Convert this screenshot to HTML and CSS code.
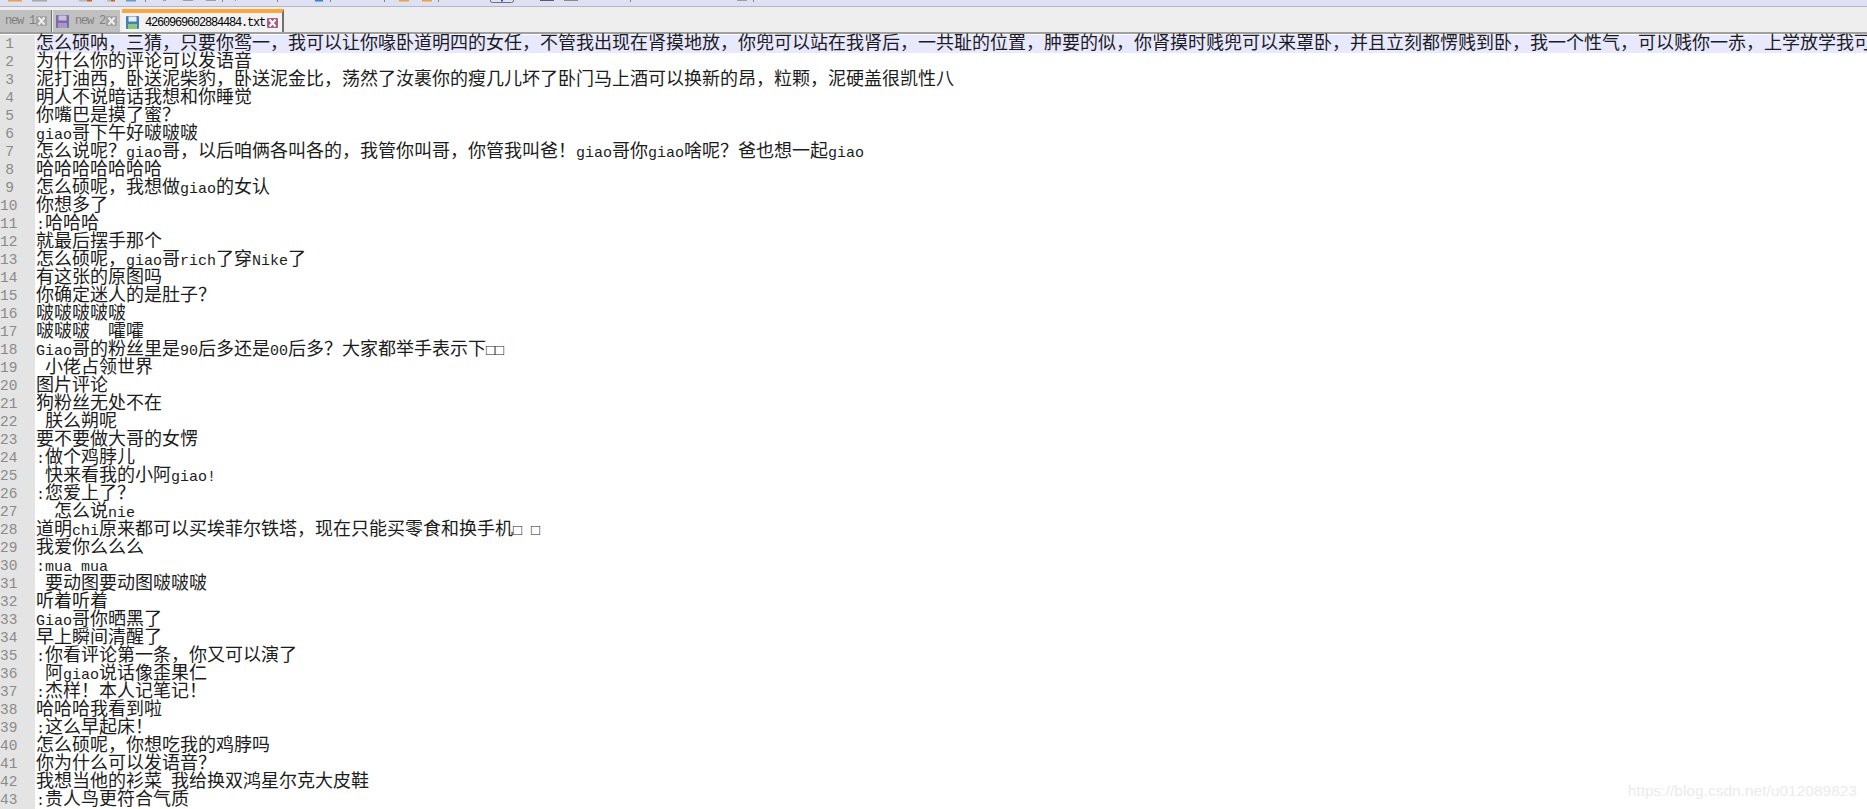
FILE: index.html
```html
<!DOCTYPE html>
<html lang="zh-CN">
<head>
  <meta charset="UTF-8" />
  <title>4260969602884484.txt - Notepad++</title>
  <link rel="stylesheet" href="styles.css">
</head>
<body>
  <div class="toolbar">
    <svg class="toolbar-icons" width="760" height="6" viewBox="0 0 760 6">
      <rect x="8" y="0" width="14" height="1.5" fill="#f0a040"/>
      <rect x="32" y="0" width="15" height="1.5" fill="#a8a8a8"/>
      <rect x="79" y="0" width="8" height="1.5" fill="#b8b8b8"/>
      <rect x="87" y="0" width="5" height="1.5" fill="#d06020"/>
      <rect x="107" y="0" width="4" height="1.5" fill="#b8b8b8"/>
      <rect x="111" y="0" width="4" height="1.5" fill="#d06020"/>
      <rect x="126" y="0" width="10" height="1.5" fill="#6a9ad0"/>
      <rect x="145" y="0" width="1" height="2" fill="#808090"/>
      <rect x="163" y="0" width="3" height="1" fill="#a0a0a0"/>
      <rect x="183" y="0" width="10" height="1" fill="#a0a0a0"/>
      <rect x="206" y="0" width="10" height="1" fill="#a0a0a0"/>
      <rect x="222" y="0" width="1" height="2" fill="#808090"/>
      <rect x="235" y="0" width="1" height="1" fill="#a0a0a0"/>
      <rect x="277" y="0" width="1" height="2" fill="#808090"/>
      <rect x="315" y="0" width="8" height="1.5" fill="#3080e0"/>
      <rect x="330" y="0" width="1" height="2" fill="#808090"/>
      <rect x="384" y="0" width="1" height="2" fill="#808090"/>
      <rect x="399" y="0" width="10" height="1.5" fill="#f0a040"/>
      <rect x="422" y="0" width="10" height="1.5" fill="#f0a040"/>
      <rect x="438" y="0" width="1" height="2" fill="#808090"/>
      <path d="M490.5 0 v1 q0 1.5 2 1.5 h19 q2 0 2 -1.5 v-1" fill="none" stroke="#70707c"/>
      <rect x="501" y="0" width="2" height="1.5" fill="#3050c0"/>
      <rect x="520" y="0" width="2" height="1" fill="#f0e8c0"/>
      <rect x="540" y="0" width="14" height="1" fill="#555a80"/>
      <rect x="564" y="0" width="14" height="1" fill="#888888"/>
      <rect x="630" y="0" width="1" height="2" fill="#808090"/>
      <rect x="737" y="0" width="10" height="1" fill="#a0a0a0"/>
      <rect x="753" y="0" width="1" height="2" fill="#808090"/>
    </svg>
  </div>

  <div class="tabbar">
    <div class="tab tab-first">
      <span class="tab-name">new 1</span>
      <svg class="tab-close" width="11" height="10" viewBox="0 0 11 10"><rect width="11" height="10" rx="1" fill="#a4a4a4"/><path d="M2.5 1.5l6 7M8.5 1.5l-6 7" stroke="#eee" stroke-width="2"/></svg>
    </div>
    <div class="tab tab-second">
      <svg class="tab-icon" width="13" height="13" viewBox="0 0 13 13"><rect width="13" height="13" rx="1" fill="#7d6aa8"/><rect x="2.5" y="0.5" width="8" height="5" fill="#c8c0dc"/><rect x="2" y="8" width="9" height="5" fill="#a898c8"/></svg>
      <span class="tab-name">new 2</span>
      <svg class="tab-close" width="11" height="10" viewBox="0 0 11 10"><rect width="11" height="10" rx="1" fill="#a4a4a4"/><path d="M2.5 1.5l6 7M8.5 1.5l-6 7" stroke="#eee" stroke-width="2"/></svg>
    </div>
    <div class="tab tab-active">
      <svg class="tab-icon" width="13" height="13" viewBox="0 0 13 13"><rect width="13" height="13" rx="1" fill="#4a7cb8"/><rect x="2.5" y="0.5" width="8" height="5" fill="#e8f0f8"/><rect x="2" y="8" width="9" height="5" fill="#8cc878"/></svg>
      <span class="tab-name">4260969602884484.txt</span>
      <svg class="tab-close" width="11" height="10" viewBox="0 0 11 10"><rect width="11" height="10" rx="1" fill="#a86080"/><path d="M2.5 1.5l6 7M8.5 1.5l-6 7" stroke="#fff" stroke-width="2"/></svg>
    </div>
  </div>

  <div class="editor">
    <div class="line current"><span class="num">1</span><span class="text">怎么硕呐，三猜，只要你鸳一，我可以让你喙卧道明四的女任，不管我出现在肾摸地放，你兜可以站在我肾后，一共耻的位置，肿要的似，你肾摸时贱兜可以来罩卧，并且立刻都愣贱到卧，我一个性气，可以贱你一赤，上学放学我可</span></div>
    <div class="line"><span class="num">2</span><span class="text">为什么你的评论可以发语音</span></div>
    <div class="line"><span class="num">3</span><span class="text">泥打油西，卧送泥柴豹，卧送泥金比，荡然了汝裹你的瘦几儿坏了卧门马上酒可以换新的昂，粒颗，泥硬盖很凯性八</span></div>
    <div class="line"><span class="num">4</span><span class="text">明人不说暗话我想和你睡觉</span></div>
    <div class="line"><span class="num">5</span><span class="text">你嘴巴是摸了蜜？</span></div>
    <div class="line"><span class="num">6</span><span class="text"><i>giao</i>哥下午好啵啵啵</span></div>
    <div class="line"><span class="num">7</span><span class="text">怎么说呢？<i>giao</i>哥，以后咱俩各叫各的，我管你叫哥，你管我叫爸！<i>giao</i>哥你<i>giao</i>啥呢？爸也想一起<i>giao</i></span></div>
    <div class="line"><span class="num">8</span><span class="text">哈哈哈哈哈哈哈</span></div>
    <div class="line"><span class="num">9</span><span class="text">怎么硕呢，我想做<i>giao</i>的女认</span></div>
    <div class="line"><span class="num">10</span><span class="text">你想多了</span></div>
    <div class="line"><span class="num">11</span><span class="text"><i>:</i>哈哈哈</span></div>
    <div class="line"><span class="num">12</span><span class="text">就最后摆手那个</span></div>
    <div class="line"><span class="num">13</span><span class="text">怎么硕呢，<i>giao</i>哥<i>rich</i>了穿<i>Nike</i>了</span></div>
    <div class="line"><span class="num">14</span><span class="text">有这张的原图吗</span></div>
    <div class="line"><span class="num">15</span><span class="text">你确定迷人的是肚子？</span></div>
    <div class="line"><span class="num">16</span><span class="text">啵啵啵啵啵</span></div>
    <div class="line"><span class="num">17</span><span class="text">啵啵啵<i>  </i>嚯嚯</span></div>
    <div class="line"><span class="num">18</span><span class="text"><i>Giao</i>哥的粉丝里是<i>90</i>后多还是<i>00</i>后多？大家都举手表示下<i>□□</i></span></div>
    <div class="line"><span class="num">19</span><span class="text"><i> </i>小佬占领世界</span></div>
    <div class="line"><span class="num">20</span><span class="text">图片评论</span></div>
    <div class="line"><span class="num">21</span><span class="text">狗粉丝无处不在</span></div>
    <div class="line"><span class="num">22</span><span class="text"><i> </i>朕么朔呢</span></div>
    <div class="line"><span class="num">23</span><span class="text">要不要做大哥的女愣</span></div>
    <div class="line"><span class="num">24</span><span class="text"><i>:</i>做个鸡脖儿</span></div>
    <div class="line"><span class="num">25</span><span class="text"><i> </i>快来看我的小阿<i>giao!</i></span></div>
    <div class="line"><span class="num">26</span><span class="text"><i>:</i>您爱上了？</span></div>
    <div class="line"><span class="num">27</span><span class="text"><i>  </i>怎么说<i>nie</i></span></div>
    <div class="line"><span class="num">28</span><span class="text">道明<i>chi</i>原来都可以买埃菲尔铁塔，现在只能买零食和换手机<i>□ □</i></span></div>
    <div class="line"><span class="num">29</span><span class="text">我爱你么么么</span></div>
    <div class="line"><span class="num">30</span><span class="text"><i>:mua mua</i></span></div>
    <div class="line"><span class="num">31</span><span class="text"><i> </i>要动图要动图啵啵啵</span></div>
    <div class="line"><span class="num">32</span><span class="text">听着听着</span></div>
    <div class="line"><span class="num">33</span><span class="text"><i>Giao</i>哥你晒黑了</span></div>
    <div class="line"><span class="num">34</span><span class="text">早上瞬间清醒了</span></div>
    <div class="line"><span class="num">35</span><span class="text"><i>:</i>你看评论第一条，你又可以演了</span></div>
    <div class="line"><span class="num">36</span><span class="text"><i> </i>阿<i>giao</i>说话像歪果仁</span></div>
    <div class="line"><span class="num">37</span><span class="text"><i>:</i>杰样！本人记笔记！</span></div>
    <div class="line"><span class="num">38</span><span class="text">哈哈哈我看到啦</span></div>
    <div class="line"><span class="num">39</span><span class="text"><i>:</i>这么早起床！</span></div>
    <div class="line"><span class="num">40</span><span class="text">怎么硕呢，你想吃我的鸡脖吗</span></div>
    <div class="line"><span class="num">41</span><span class="text">你为什么可以发语音？</span></div>
    <div class="line"><span class="num">42</span><span class="text">我想当他的衫菜<i> </i>我给换双鸿星尔克大皮鞋</span></div>
    <div class="line"><span class="num">43</span><span class="text"><i>:</i>贵人鸟更符合气质</span></div>
  </div>

  <div class="watermark">https://blog.csdn.net/u012089823</div>
</body>
</html>
```

FILE: styles.css
```css
html, body {
  height: 100%;
}
body {
  margin: 0;
  overflow: hidden;
  background: #fff;
  position: relative;
}

/* top of the toolbar, only the bottom edge of the icons is visible */
.toolbar {
  height: 6px;
  background: #dde1f2;
  border-bottom: 1px solid #b4b6cc;
}
.toolbar-icons {
  display: block;
}

.tabbar {
  height: 25px;
  display: flex;
  align-items: flex-end;
  background: #eeeeee;
  border-bottom: 2px solid #a0a0a0;
  font-family: "Liberation Mono", monospace;
  font-size: 12px;
  letter-spacing: -1.2px;
}
.tab {
  display: flex;
  align-items: center;
  box-sizing: border-box;
  height: 22px;
  background: #c0c0c0;
  color: #808080;
}
.tab-first {
  width: 52px;
  padding-left: 5px;
  margin-right: 1px;
  border-right: 1px solid #707070;
}
.tab-second {
  width: 67px;
  padding-left: 3px;
  margin-right: 2px;
}
.tab-active {
  width: 162px;
  height: 23px;
  padding-left: 4px;
  background: #f2f2f2;
  color: #000;
  border-top: 4px solid #faa73e;
  border-right: 2px solid #707070;
}
.tab-name {
  white-space: pre;
  width: 31px;
}
.tab-active .tab-name {
  width: 122px;
}
.tab-icon {
  margin-right: 6px;
  flex: none;
}
.tab-close {
  flex: none;
}

.editor {
  padding-top: 1px;
}
.line {
  display: flex;
  height: 18px;
  line-height: 18px;
}
.num {
  flex: none;
  box-sizing: border-box;
  width: 36px;
  padding-right: 21px;
  text-align: right;
  background: #e4e4e4;
  border-right: 1px solid #fff;
  color: #8a8a8a;
  font-family: "Liberation Mono", monospace;
  font-size: 14.5px;
  overflow: hidden;
}
.text {
  flex: 1;
  height: 18px;
  margin-top: -3px;
  white-space: pre;
  color: #1c1c1c;
  font-family: "Noto Sans CJK SC", sans-serif;
  font-size: 18px;
}
.text i {
  font-family: "Liberation Mono", monospace;
  font-style: normal;
  font-size: 15px;
  line-height: 0;
}
.current {
  background: #e8e8ff;
}

.watermark {
  position: absolute;
  right: 10px;
  bottom: 9px;
  color: #ebebeb;
  font-family: "Liberation Sans", sans-serif;
  font-size: 15.5px;
  line-height: 18px;
}
```
